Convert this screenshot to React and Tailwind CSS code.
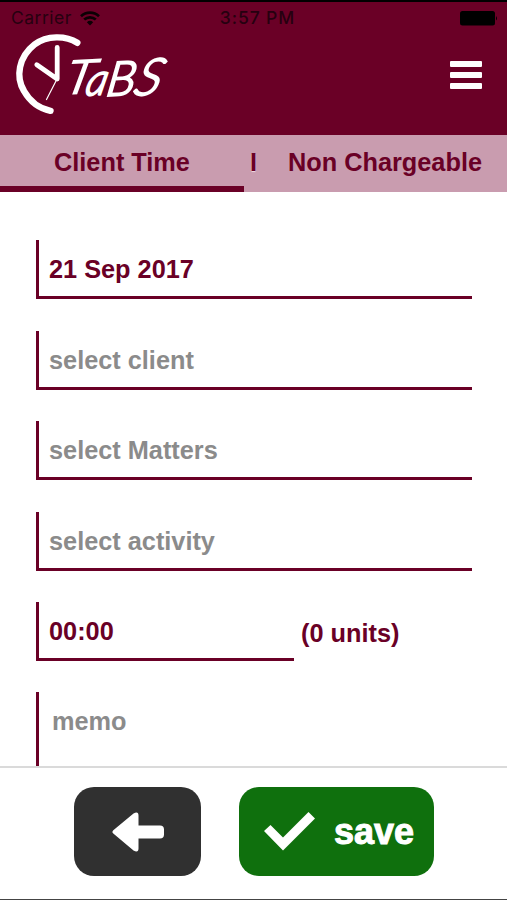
const fields = [
  { id: 'date', text: '21 Sep 2017', filled: true },
  { id: 'client', text: 'select client', filled: false },
  { id: 'matters', text: 'select Matters', filled: false },
  { id: 'activity', text: 'select activity', filled: false },
];

function StatusBar() {
  return (
    <div className="grid grid-cols-3 items-center h-[31px] pl-[11px] pr-[9px] pt-[2px] text-[17.5px] font-normal text-[#260010] font-['Inter',sans-serif]">
      <div className="flex items-center gap-[8px]">
        <span className="tracking-[0.5px]">Carrier</span>
        <svg width="20" height="15" viewBox="0 0 20 15" fill="none" stroke="#0c0004" strokeWidth="2.7">
          <path d="M1 5.2 C6 0.4 14 0.4 19 5.2" />
          <path d="M4.2 8.6 C7.5 5.5 12.5 5.5 15.8 8.6" />
          <path d="M6.8 11.2 Q10 8.4 13.2 11.2 L10 14.5 Z" fill="#0c0004" stroke="none" />
        </svg>
      </div>
      <span className="text-center font-medium text-[17.5px] tracking-[0.9px] pl-[6px]">3:57 PM</span>
      <svg className="justify-self-end" width="38" height="15" viewBox="0 0 38 15" fill="#000">
        <rect x="0" y="0" width="35" height="14.5" rx="2.5" />
        <path d="M36 5 Q38 7.3 36 9.6 Z" />
      </svg>
    </div>
  );
}

function Logo() {
  return (
    <svg width="180" height="90" viewBox="12 32 180 90" fill="none" stroke="#fff" strokeLinecap="round">
      <path d="M77.3 42.8 C66 35.5 47 35 34.5 44.5 C18.5 57 15.5 77 24 91 C30 101.5 39 108.5 50.5 110.8" strokeWidth="6.4" />
      <path d="M57.2 47.5 V79 L36.8 64.7" strokeWidth="4.8" strokeLinejoin="round" />
      <path d="M56.5 80 L46.5 99.5" strokeWidth="1.2" />
      <g fill="#fff" strokeWidth="2" fontFamily="Lato, sans-serif" fontStyle="italic" fontWeight="300">
        <text transform="translate(63 94) rotate(-3) skewX(-16)" fontSize="46" textLength="28" lengthAdjust="spacingAndGlyphs">T</text>
        <text transform="translate(84 95.5) rotate(-3) skewX(-16)" fontSize="44" textLength="21" lengthAdjust="spacingAndGlyphs">a</text>
        <text transform="translate(105 96) rotate(-3) skewX(-12)" fontSize="47" textLength="29" lengthAdjust="spacingAndGlyphs">B</text>
        <text transform="translate(132 95.5) rotate(-3) skewX(-20)" fontSize="50" textLength="26" lengthAdjust="spacingAndGlyphs">S</text>
      </g>
    </svg>
  );
}

function Header() {
  return (
    <header className="h-[135px] shrink-0 bg-[#6a0026] border-t-2 border-black">
      <StatusBar />
      <div className="flex justify-between items-start pl-3 pr-[25px]">
        <div className="-mt-px">
          <Logo />
        </div>
        <button type="button" aria-label="Menu" className="flex flex-col gap-[5px] mt-7">
          <span className="block w-8 h-[6px] rounded-[1px] bg-white" />
          <span className="block w-8 h-[6px] rounded-[1px] bg-white" />
          <span className="block w-8 h-[6px] rounded-[1px] bg-white" />
        </button>
      </div>
    </header>
  );
}

function Tabs() {
  return (
    <nav className="flex h-[57px] shrink-0 bg-[#c99caf] [text-shadow:0_1px_1px_#f0dce4]">
      <button type="button" className="w-[244px] h-full border-b-[6px] border-[#6a0026] leading-[51px] pt-[2px]">
        Client Time
      </button>
      <span className="w-[19px] text-center leading-[54px]">I</span>
      <button type="button" className="flex-1 h-full pl-[25px] text-left leading-[51px] pb-[3px]">
        Non Chargeable
      </button>
    </nav>
  );
}

function Field({ text, filled }) {
  return (
    <div
      className={`h-[59px] border-l-[3px] border-b-[3px] border-[#6a0026] pl-[10px] leading-[58px] ${
        filled ? 'text-[#6a0026]' : 'text-[#8b8b8b]'
      }`}
    >
      {text}
    </div>
  );
}

export default function App() {
  return (
    <div className="flex flex-col w-[507px] h-[900px] overflow-hidden bg-white text-[25.3px] font-bold text-[#6a0026] font-['Liberation_Sans',Arial,sans-serif]">
      <Header />
      <Tabs />

      <main className="flex-1 min-h-0 overflow-hidden flex flex-col gap-[31.5px] pt-[48px] pl-[36px] pr-[35px]">
        {fields.map((field) => (
          <Field key={field.id} text={field.text} filled={field.filled} />
        ))}

        <div className="flex h-[59px] gap-[7px]">
          <div className="w-[258px]">
            <Field text="00:00" filled />
          </div>
          <span className="leading-[62px]">(0 units)</span>
        </div>

        <div className="h-[120px] shrink-0 -mt-[0.5px] border-l-[3px] border-[#6a0026] pl-[13px] leading-[58px] text-[#8b8b8b]">
          memo
        </div>
      </main>

      <footer className="flex h-[134px] shrink-0 gap-[38px] pl-[74px] pt-[19px] border-t-2 border-t-[#dadada] border-b border-b-[#444]">
        <button type="button" aria-label="Back" className="flex items-center justify-center w-[127px] h-[89px] rounded-[20px] bg-[#303030]">
          <svg width="52" height="40" viewBox="0 0 52 40" fill="#fff">
            <path d="M1.3 18.2 L21.5 1.5 Q26.5 -1 26.5 3.5 V13.5 H48 Q52 13.5 52 17.5 V22.5 Q52 26.5 48 26.5 H26.5 V36.5 Q26.5 41 21.5 38.5 L1.3 21.5 Q-0.5 20 1.3 18.2 Z" />
          </svg>
        </button>
        <button
          type="button"
          className="flex items-center w-[195px] h-[89px] pl-[25px] gap-[19px] rounded-[20px] bg-[#0f700d] text-white text-[36px]"
        >
          <svg width="51" height="39" viewBox="0 0 51 39" fill="#fff">
            <path d="M0 19 L6.5 13 L19 25.5 L44.5 0 L51 6.5 L19 38.5 Z" />
          </svg>
          <span className="[-webkit-text-stroke:1px_white]">save</span>
        </button>
      </footer>
    </div>
  );
}
